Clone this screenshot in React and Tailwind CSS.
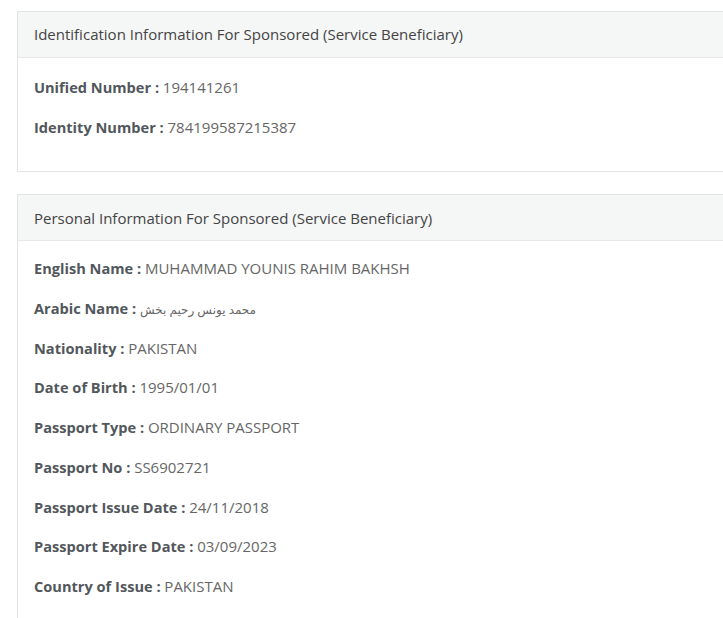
import React from 'react';

const idInfo = [
  { label: 'Unified Number', value: '194141261' },
  { label: 'Identity Number', value: '784199587215387' },
];

const personalInfo = [
  { label: 'English Name', value: 'MUHAMMAD YOUNIS RAHIM BAKHSH' },
  { label: 'Arabic Name', value: 'محمد يونس رحيم بخش', arabic: true },
  { label: 'Nationality', value: 'PAKISTAN' },
  { label: 'Date of Birth', value: '1995/01/01' },
  { label: 'Passport Type', value: 'ORDINARY PASSPORT' },
  { label: 'Passport No', value: 'SS6902721' },
  { label: 'Passport Issue Date', value: '24/11/2018' },
  { label: 'Passport Expire Date', value: '03/09/2023' },
  { label: 'Country of Issue', value: 'PAKISTAN' },
];

function Row({ label, value, arabic }) {
  return (
    <div className="h-[20px] leading-[20px] mb-[19.7px] whitespace-nowrap">
      <span className="text-[14.6px] font-bold text-[#52575c]">{label} : </span>
      {arabic ? (
        <span className="text-[12px] text-[#666] font-['Noto_Sans','DejaVu_Sans',sans-serif]">{value}</span>
      ) : (
        <span className="text-[15px] text-[#666]">{value}</span>
      )}
    </div>
  );
}

function Panel({ title, rows, bodyClass }) {
  return (
    <div className="w-[760px] border border-[#e3e4e4] bg-white">
      <div className="h-[46px] bg-[#f5f6f6] border-b border-[#e8e9e9] px-[16px] flex items-center text-[15px] text-[#444]">
        {title}
      </div>
      <div className={`px-[16px] ${bodyClass}`}>
        {rows.map(r => <Row key={r.label} {...r} />)}
      </div>
    </div>
  );
}

export default function App() {
  return (
    <div className="w-[723px] h-[618px] overflow-hidden bg-white pt-[11px] pl-[17px] font-['Open_Sans',sans-serif]">
      <Panel
        title="Identification Information For Sponsored (Service Beneficiary)"
        rows={idInfo}
        bodyClass="pt-[19px] pb-[15px]"
      />
      <div className="h-[22px]" />
      <Panel
        title="Personal Information For Sponsored (Service Beneficiary)"
        rows={personalInfo}
        bodyClass="pt-[17px] pb-[20px]"
      />
    </div>
  );
}
